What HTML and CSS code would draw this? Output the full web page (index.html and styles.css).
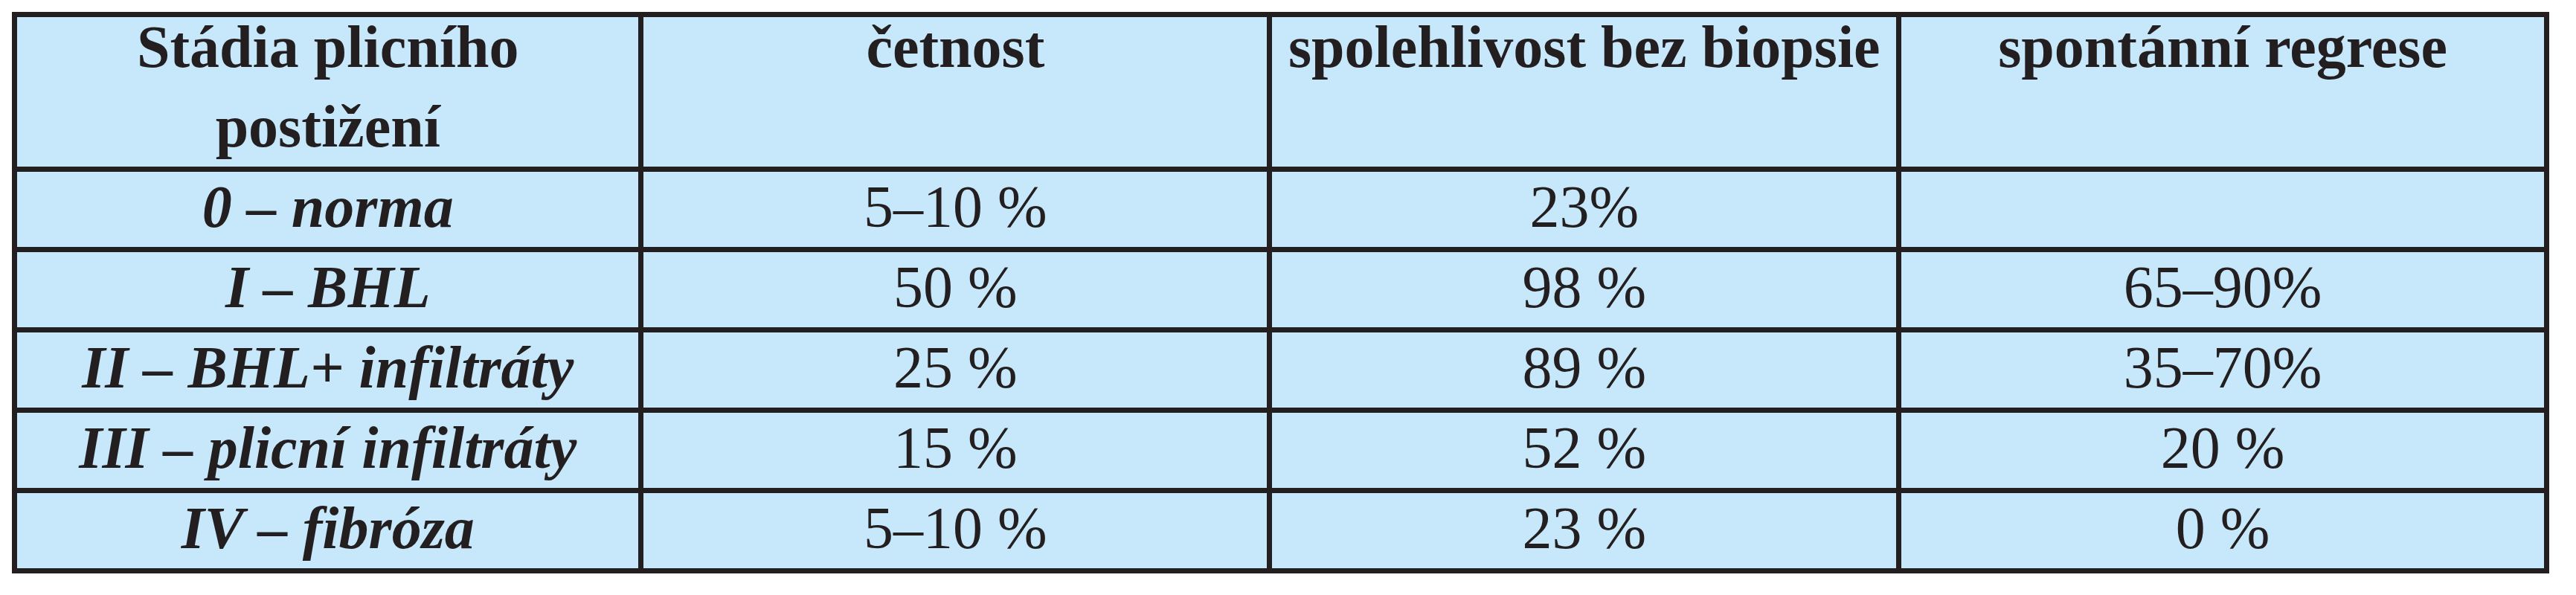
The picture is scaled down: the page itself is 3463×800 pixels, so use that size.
FILE: index.html
```html
<!DOCTYPE html>
<html lang="cs">
<head>
<meta charset="utf-8">
<title>Stádia plicního postižení</title>
<link rel="stylesheet" href="styles.css">
</head>
<body>
<table class="stages">
  <colgroup>
    <col class="c1"><col class="c2"><col class="c3"><col class="c4">
  </colgroup>
  <thead>
    <tr>
      <th><div class="head">Stádia plicního<br>postižení</div></th>
      <th><div class="head">četnost</div></th>
      <th><div class="head">spolehlivost bez biopsie</div></th>
      <th><div class="head">spontánní regrese</div></th>
    </tr>
  </thead>
  <tbody>
    <tr>
      <td class="stage">0 – norma</td>
      <td>5–10 %</td>
      <td>23%</td>
      <td></td>
    </tr>
    <tr>
      <td class="stage">I – BHL</td>
      <td>50 %</td>
      <td>98 %</td>
      <td>65–90%</td>
    </tr>
    <tr>
      <td class="stage">II – BHL+ infiltráty</td>
      <td>25 %</td>
      <td>89 %</td>
      <td>35–70%</td>
    </tr>
    <tr>
      <td class="stage">III – plicní infiltráty</td>
      <td>15 %</td>
      <td>52 %</td>
      <td>20 %</td>
    </tr>
    <tr>
      <td class="stage">IV – fibróza</td>
      <td>5–10 %</td>
      <td>23 %</td>
      <td>0 %</td>
    </tr>
  </tbody>
</table>
</body>
</html>
```
FILE: styles.css
```css
html, body {
  margin: 0;
  padding: 0;
  background: #ffffff;
}

body {
  padding: 16px 0 0 16px;
  font-family: "Liberation Serif", "Times New Roman", serif;
  color: #231f20;
}

.stages {
  border-collapse: collapse;
  table-layout: fixed;
  width: 3411px;
  background: #c7e8fa;
  font-size: 80px;
}

.c1 { width: 24.75%; }
.c2 { width: 24.82%; }
.c3 { width: 24.85%; }
.c4 { width: 25.58%; }

.stages th,
.stages td {
  border: 7px solid #231f20;
  padding: 0;
  text-align: center;
  white-space: nowrap;
}

.stages th {
  height: 201px;
  vertical-align: top;
  font-weight: bold;
  line-height: 107px;
}

.head {
  margin-top: -13px;
}

.stages td {
  height: 95px;
  padding-bottom: 6px;
  line-height: 95px;
  vertical-align: middle;
  font-weight: normal;
}

.stages td.stage {
  font-weight: bold;
  font-style: italic;
}
```
